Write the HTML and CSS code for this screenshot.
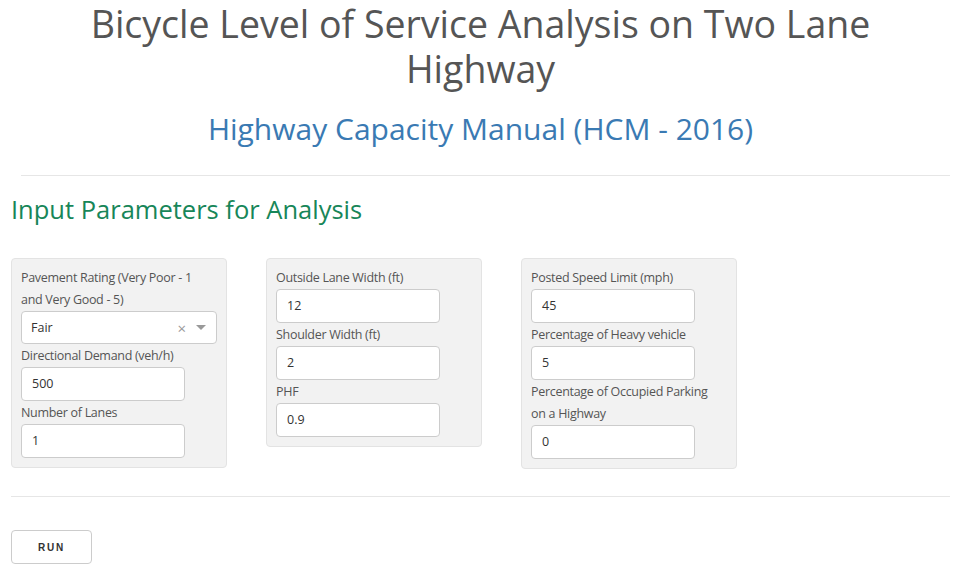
FILE: index.html
```html
<!DOCTYPE html>
<html>
<head>
<meta charset="utf-8">
<link rel="stylesheet" href="styles.css">
</head>
<body>
<div class="page">
  <header class="head">
    <h1 class="title">Bicycle Level of Service Analysis on Two Lane Highway</h1>
    <h2 class="subtitle">Highway Capacity Manual (HCM - 2016)</h2>
  </header>
  <hr class="rule rule-top">
  <h3 class="section">Input Parameters for Analysis</h3>
  <div class="panels">
    <div class="well">
      <label class="lbl">Pavement Rating (Very Poor - 1 and Very Good - 5)</label>
      <div class="select">
        <span class="sel-value">Fair</span>
        <span class="sel-clear">×</span>
        <span class="sel-caret"></span>
      </div>
      <label class="lbl">Directional Demand (veh/h)</label>
      <div class="input">500</div>
      <label class="lbl">Number of Lanes</label>
      <div class="input">1</div>
    </div>
    <div class="well">
      <label class="lbl">Outside Lane Width (ft)</label>
      <div class="input">12</div>
      <label class="lbl">Shoulder Width (ft)</label>
      <div class="input">2</div>
      <label class="lbl">PHF</label>
      <div class="input">0.9</div>
    </div>
    <div class="well">
      <label class="lbl">Posted Speed Limit (mph)</label>
      <div class="input">45</div>
      <label class="lbl">Percentage of Heavy vehicle</label>
      <div class="input">5</div>
      <label class="lbl">Percentage of Occupied Parking on a Highway</label>
      <div class="input">0</div>
    </div>
  </div>
  <hr class="rule rule-bottom">
  <button class="run">RUN</button>
</div>
</body>
</html>
```
FILE: styles.css
```css
* { box-sizing: border-box; }
body {
  margin: 0;
  font-family: "Open Sans", "Liberation Sans", sans-serif;
  color: #333;
  background: #fff;
}
.page {
  padding: 0 10px 0 11px;
}
.head {
  text-align: center;
  padding-top: 1px;
}
.title {
  margin: 0 auto;
  max-width: 820px;
  font-size: 37.5px;
  font-weight: 400;
  line-height: 45px;
  color: #555;
}
.subtitle {
  margin: 18px 0 0;
  font-size: 30px;
  font-weight: 400;
  line-height: 40px;
  color: #3a7ab3;
}
.rule {
  border: 0;
  border-top: 1px solid #e6e6e6;
  margin: 0;
}
.rule-top {
  margin: 26px 0 0 10px;
}
.section {
  margin: 16px 0 0;
  font-size: 25.5px;
  font-weight: 400;
  line-height: 34px;
  color: #178659;
}
.panels {
  display: flex;
  align-items: flex-start;
  gap: 39px;
  margin-top: 32px;
}
.well {
  width: 216px;
  background: #f2f2f2;
  border: 1px solid #e3e3e3;
  border-radius: 4px;
  padding: 8px 9px 8px;
  display: flex;
  flex-direction: column;
  align-items: flex-start;
}
.lbl {
  display: block;
  max-width: 188px;
  font-size: 12.5px;
  letter-spacing: -0.3px;
  line-height: 22px;
  color: #555;
}
.input {
  width: 164px;
  height: 34px;
  background: #fff;
  border: 1px solid #ccc;
  border-radius: 4px;
  padding: 0 10px;
  font-size: 12.5px;
  line-height: 32px;
  color: #333;
  margin-bottom: 1px;
}
.select {
  width: 196px;
  height: 33px;
  background: #fff;
  border: 1px solid #ccc;
  border-radius: 4px;
  padding: 0 10px 0 9px;
  display: flex;
  align-items: center;
  font-size: 12.5px;
  color: #333;
  margin-bottom: 1px;
}
.sel-value { flex: 1; }
.sel-clear {
  color: #999;
  font-size: 15px;
  margin-right: 10px;
}
.sel-caret {
  width: 0;
  height: 0;
  border-left: 5px solid transparent;
  border-right: 5px solid transparent;
  border-top: 5px solid #999;
}
.rule-bottom {
  margin: 27px 0 0;
}
.run {
  margin-top: 33px;
  width: 81px;
  height: 34px;
  background: #fff;
  border: 1px solid #ccc;
  border-radius: 4px;
  font-family: "Liberation Sans", Arial, sans-serif;
  font-size: 10px;
  font-weight: 700;
  letter-spacing: 1.8px;
  color: #333;
}
```
